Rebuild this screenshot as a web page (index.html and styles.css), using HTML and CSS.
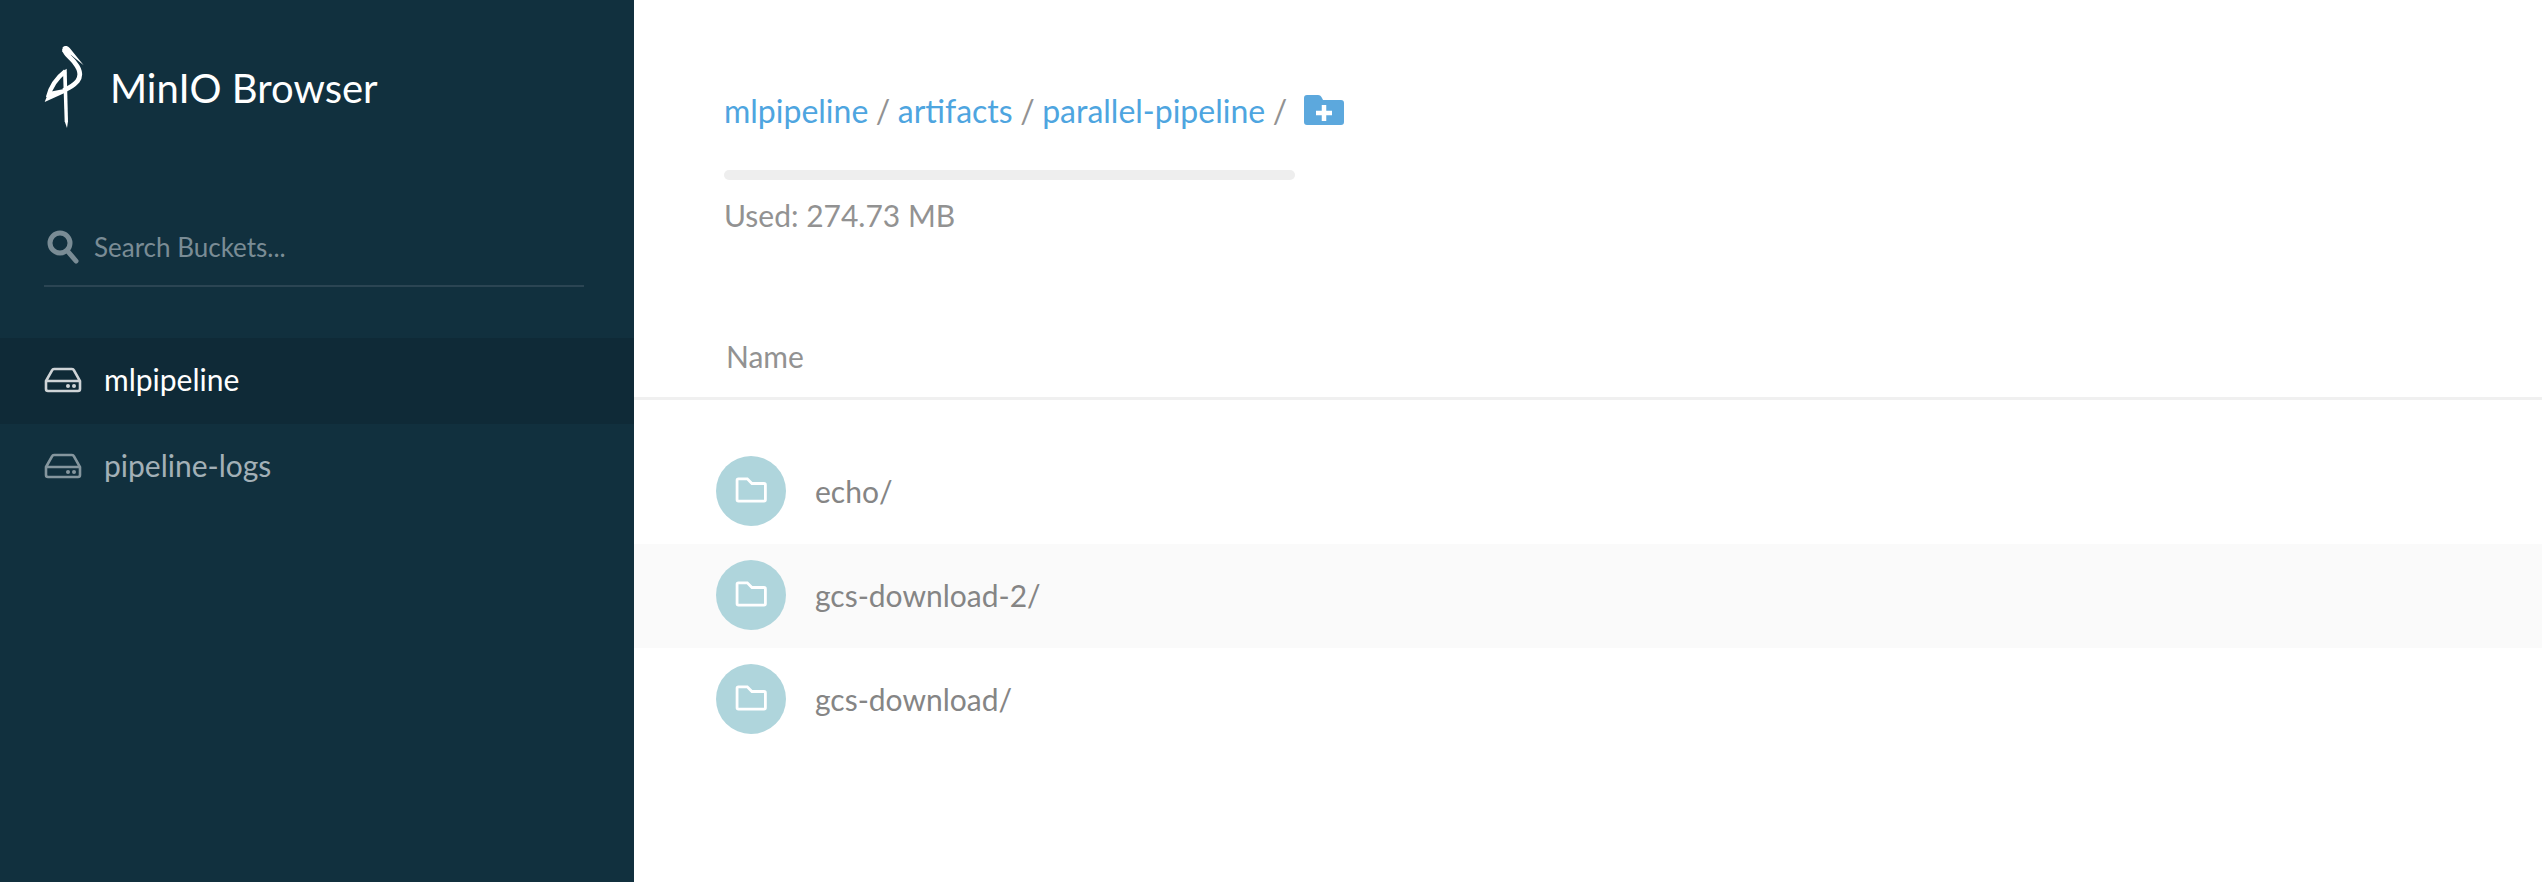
FILE: index.html
```html
<!DOCTYPE html>
<html lang="en">

<head>
  <meta charset="UTF-8">
  <meta name="viewport" content="width=device-width, initial-scale=1.0">
  <title>MinIO Browser</title>
  <link rel="stylesheet" href="styles.css">
</head>

<body>
  <div class="app">
    <aside class="sidebar">
      <header class="brand">
        <svg class="brand-logo" viewBox="40 40 120 246">
          <path class="logo-line" d="M102 50C100 62 120 74 132 90C150 112 152 130 140 146C128 160 112 168 98 174" />
          <path class="logo-wing" d="M52 194C60 162 78 136 104 116" />
          <path class="logo-fill" d="M96 44C103 37 111 39 117 46L159 98L122 68L95 58Z" />
          <path class="logo-fill" d="M42 208L54 178L104 168L100 182Z" />
          <path class="logo-fill" d="M97 116L108 108L112 266L109 286L102 266Z" />
        </svg>
        <span class="brand-name">MinIO Browser</span>
      </header>
      <div class="search">
        <svg class="search-icon" viewBox="0 0 32 36">
          <circle cx="13" cy="14" r="10" />
          <path d="M20.5 22L29 32" />
        </svg>
        <input class="search-input" type="text" placeholder="Search Buckets...">
      </div>
      <ul class="buckets">
        <li class="bucket active">
          <svg class="bucket-icon" viewBox="0 0 38 26">
            <path d="M2 14L8 3.500C8.400 2.500 9 2 10 2H28C29 2 29.600 2.500 30 3.500L36 14V22C36 23.500 35.500 24 34 24H4C2.500 24 2 23.500 2 22Z M2 14H36" />
            <circle class="bucket-dot" cx="24" cy="19" r="2" />
            <circle class="bucket-dot" cx="30" cy="19" r="2" />
          </svg>
          <span>mlpipeline</span>
        </li>
        <li class="bucket">
          <svg class="bucket-icon" viewBox="0 0 38 26">
            <path d="M2 14L8 3.500C8.400 2.500 9 2 10 2H28C29 2 29.600 2.500 30 3.500L36 14V22C36 23.500 35.500 24 34 24H4C2.500 24 2 23.500 2 22Z M2 14H36" />
            <circle class="bucket-dot" cx="24" cy="19" r="2" />
            <circle class="bucket-dot" cx="30" cy="19" r="2" />
          </svg>
          <span>pipeline-logs</span>
        </li>
      </ul>
    </aside>

    <main class="content">
      <section class="summary">
        <div class="path">
          <a href="#">mlpipeline</a>
          <span class="slash">/</span>
          <a href="#">artifacts</a>
          <span class="slash">/</span>
          <a href="#">parallel-pipeline</a>
          <span class="slash">/</span>
          <svg class="add-folder" viewBox="0 0 40 30">
            <path class="add-shape" d="M0 3C0 1 1 0 3 0H14C16 0 17 1 18 3L19 5H37C39 5 40 6 40 8V27C40 29 39 30 37 30H3C1 30 0 29 0 27Z" />
            <path class="add-plus" d="M20 10V26M12 18H28" />
          </svg>
        </div>
        <div class="usage-bar"></div>
        <div class="usage-text">Used: 274.73 MB</div>
      </section>

      <div class="list-head">Name</div>

      <ul class="files">
        <li class="file">
          <span class="file-icon">
            <svg viewBox="0 0 34 28"><path d="M2 3.500C2 2.500 2.500 2 3.500 2H13L18 7H31C32 7 32.500 7.500 32.500 8.500V24.500C32.500 25.500 32 26 31 26H3.500C2.500 26 2 25.500 2 24.500Z" /></svg>
          </span>
          <span>echo/</span>
        </li>
        <li class="file hover">
          <span class="file-icon">
            <svg viewBox="0 0 34 28"><path d="M2 3.500C2 2.500 2.500 2 3.500 2H13L18 7H31C32 7 32.500 7.500 32.500 8.500V24.500C32.500 25.500 32 26 31 26H3.500C2.500 26 2 25.500 2 24.500Z" /></svg>
          </span>
          <span>gcs-download-2/</span>
        </li>
        <li class="file">
          <span class="file-icon">
            <svg viewBox="0 0 34 28"><path d="M2 3.500C2 2.500 2.500 2 3.500 2H13L18 7H31C32 7 32.500 7.500 32.500 8.500V24.500C32.500 25.500 32 26 31 26H3.500C2.500 26 2 25.500 2 24.500Z" /></svg>
          </span>
          <span>gcs-download/</span>
        </li>
      </ul>
    </main>
  </div>
</body>

</html>
```

FILE: styles.css
```css
* {
  box-sizing: border-box;
}

body {
  margin: 0;
  font-family: Lato, "Open Sans", sans-serif;
  background-color: #fff;
  color: #929292;
  overflow: hidden;
}

ul {
  list-style: none;
  margin: 0;
  padding: 0;
}

.app {
  display: flex;
  height: 882px;
}

/* sidebar */
.sidebar {
  width: 634px;
  flex-shrink: 0;
  background-color: #11303e;
}

.brand {
  display: flex;
  align-items: center;
  gap: 26px;
  padding: 44px 44px 0;
  height: 130px;
}

.brand-logo {
  width: 40px;
  height: 82px;
}

.logo-line,
.logo-wing {
  fill: none;
  stroke: #fff;
}

.logo-line {
  stroke-width: 14;
}

.logo-wing {
  stroke-width: 13;
}

.logo-fill {
  fill: #fff;
}

.brand-name {
  color: #fff;
  font-size: 40px;
  margin-top: 2px;
}

.search {
  display: flex;
  align-items: center;
  gap: 15px;
  margin: 90px 50px 0 44px;
  height: 67px;
  padding: 0 0 12px 3px;
  border-bottom: 2px solid #2b4553;
}

.search-icon {
  width: 32px;
  height: 36px;
  fill: none;
  stroke: #7a8c95;
  stroke-width: 5;
  stroke-linecap: round;
}

.search-input {
  flex: 1;
  min-width: 0;
  border: none;
  padding: 0;
  background: none;
  font-family: inherit;
  font-size: 26px;
  color: #fff;
  outline: none;
}

.search-input::placeholder {
  color: #7a8c95;
  opacity: 1;
}

.buckets {
  margin-top: 51px;
}

.bucket {
  display: flex;
  align-items: center;
  gap: 22px;
  height: 86px;
  padding: 0 0 5px 44px;
  font-size: 30px;
  color: #a3b0b7;
}

.bucket.active {
  background-color: #0f2a37;
  color: #fff;
}

.bucket-icon {
  width: 38px;
  height: 26px;
  margin-top: 3px;
  fill: none;
  stroke: currentColor;
  stroke-width: 2.600;
  opacity: .8;
}

.bucket-dot {
  fill: currentColor;
  stroke: none;
}

/* main column */
.content {
  flex: 1;
  min-width: 0;
}

.summary {
  padding: 88px 0 0 90px;
}

.path {
  display: flex;
  align-items: center;
  gap: 7.500px;
  height: 44px;
  font-size: 32px;
}

.path a {
  color: #4ea5e0;
  text-decoration: none;
}

.add-folder {
  width: 40px;
  height: 30px;
  margin-left: 9px;
}

.add-shape {
  fill: #5ca8dd;
}

.add-plus {
  fill: none;
  stroke: #fff;
  stroke-width: 4.500;
}

.usage-bar {
  width: 571px;
  height: 10px;
  margin-top: 38px;
  border-radius: 5px;
  background-color: #eee;
}

.usage-text {
  margin-top: 17px;
  font-size: 30px;
}

.list-head {
  margin-top: 105px;
  padding: 0 0 23px 92px;
  border-bottom: 3px solid #f0f0f0;
  font-size: 30px;
}

.files {
  margin-top: 40px;
}

.file {
  display: flex;
  align-items: center;
  gap: 29px;
  height: 104px;
  padding: 0 0 2px 82px;
  font-size: 30px;
  color: #858585;
}

.file.hover {
  background-color: #fafafa;
}

.file-icon {
  display: flex;
  align-items: center;
  justify-content: center;
  width: 70px;
  height: 70px;
  border-radius: 50%;
  background-color: #afd5dc;
}

.file-icon svg {
  width: 32px;
  height: 26px;
  margin-bottom: 2px;
  fill: none;
  stroke: #fff;
  stroke-width: 3;
}
```
